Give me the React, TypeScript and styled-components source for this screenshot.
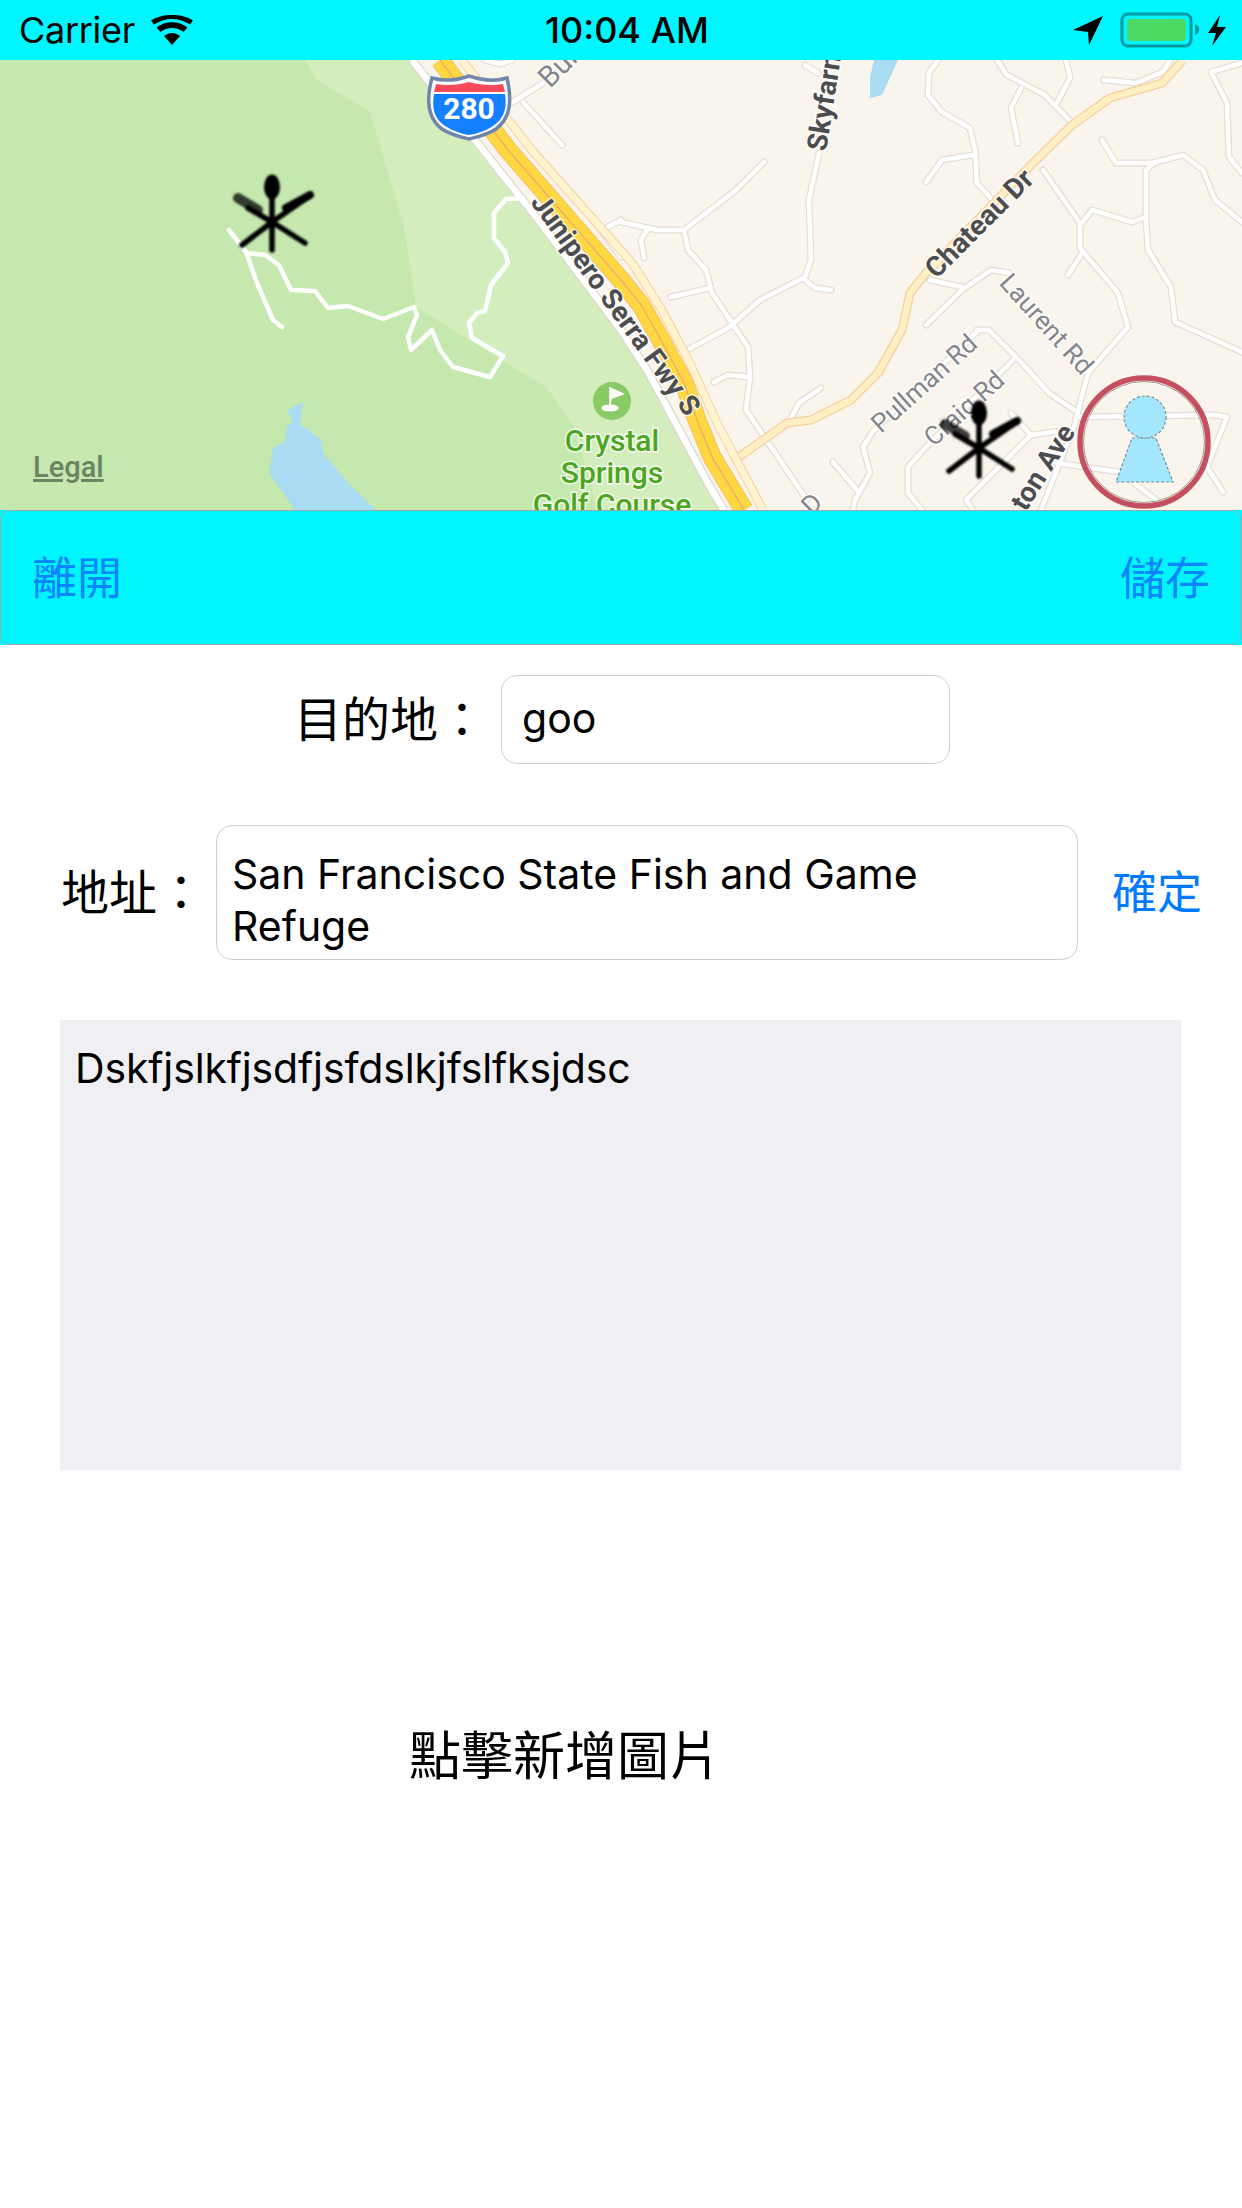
import React from "react";
import styled, { createGlobalStyle } from "styled-components";

const GlobalStyle = createGlobalStyle`
  html, body {
    margin: 0;
    padding: 0;
    background: #fff;
  }
  * {
    box-sizing: border-box;
  }
`;

const CJK = `Inter, "Noto Sans CJK TC", sans-serif`;

const Page = styled.div`
  width: 1242px;
  height: 2208px;
  overflow: hidden;
  display: flex;
  flex-direction: column;
  background: #fff;
  font-family: ${CJK};
  color: #000;
`;

const StatusBar = styled.div`
  height: 60px;
  background: #00f6ff;
  display: grid;
  grid-template-columns: 1fr auto 1fr;
  align-items: center;
  padding: 0 15px 0 19px;
`;

const StatusLeft = styled.div`
  display: flex;
  align-items: center;
  gap: 16px;
  font-size: 36px;
  letter-spacing: -0.3px;
`;

const Clock = styled.div`
  font-size: 36px;
  font-weight: 500;
  margin-left: 8px;
`;

const StatusRight = styled.div`
  display: flex;
  justify-content: flex-end;
  align-items: center;
`;

const MapView = styled.svg`
  display: block;
  width: 1242px;
  height: 450px;
  flex: none;
`;

const ToolbarShell = styled.div`
  height: 135px;
  flex: none;
  background: #00f6ff;
`;

const Toolbar = styled.div`
  height: 100%;
  border: 1.5px solid #a4a4a4;
  border-radius: 10px;
  display: flex;
  justify-content: space-between;
  align-items: center;
  padding: 2px 31px 0;
`;

const BarButton = styled.div`
  font-size: 45px;
  line-height: 60px;
  color: #0a84ff;
`;

const Row = styled.div<{ $indent: number; $top: number; $gap: number }>`
  display: flex;
  align-items: center;
  gap: ${(p) => p.$gap}px;
  margin-top: ${(p) => p.$top}px;
  padding-left: ${(p) => p.$indent}px;
`;

const Label = styled.div`
  font-size: 48px;
  line-height: 60px;
  white-space: nowrap;
`;

const Field = styled.div<{ $width: number; $height: number }>`
  width: ${(p) => p.$width}px;
  height: ${(p) => p.$height}px;
  flex: none;
  border: 1.5px solid #cfcfcf;
  border-radius: 16px;
  font-size: 41px;
  display: flex;
  align-items: center;
  padding: 0 15px 3px 20px;
  line-height: 52px;
`;

const AddressField = styled(Field)`
  padding: 14px 15px 0;
`;

const ConfirmButton = styled.div`
  font-size: 45px;
  line-height: 60px;
  color: #007aff;
  white-space: nowrap;
  margin-left: 23px;
`;

const NoteBox = styled.div`
  margin: 60px 0 0 60px;
  width: 1121px;
  height: 450px;
  background: #efeff4;
  padding: 22px 15px;
  font-size: 41px;
  line-height: 52px;
  letter-spacing: -0.14px;
`;

const AddImage = styled.div`
  margin: 252px 0 0 409px;
  font-size: 52px;
  line-height: 70px;
`;

const ROADS = [
  "M621 222 L657 230 L684 230 L736 190 L764 162",
  "M684 230 L688 250 L706 270 L712 293 L748 347 L750 377 L746 410 L807 500",
  "M647 230 L641 240 L644 258",
  "M819 153 L809 200 L811 260 L805 277 L760 300 L728 328 L678 355",
  "M805 280 L815 288 L831 290",
  "M671 297 L710 288",
  "M714 382 L728 375 L750 377",
  "M821 388 L799 403 L789 422",
  "M511 103 L543 83",
  "M523 102 L562 145",
  "M485 60 L500 64 L512 60",
  "M602 230 L621 220",
  "M602 232 L621 257",
  "M805 65 L818 73",
  "M938 60 L929 73 L928 95 L942 112 L970 128 L975 150 L977 183 L995 203",
  "M926 182 L942 160 L973 155",
  "M997 60 L1007 75 L1045 95 L1072 123",
  "M1066 60 L1070 78 L1057 103",
  "M1021 88 L1011 108 L1018 143",
  "M1104 80 L1136 83 L1163 72 L1170 60",
  "M1242 63 L1211 72 L1227 103 L1229 157 L1242 173",
  "M1102 140 L1116 163 L1152 163 L1183 155 L1203 170 L1215 200 L1242 222",
  "M1043 170 L1080 223 L1080 248 L1118 293 L1128 327 L1088 373 L1074 427 L1041 510",
  "M1082 223 L1092 210 L1132 222 L1146 217 L1146 170 L1154 163",
  "M1146 220 L1148 250 L1171 287 L1175 322 L1242 352",
  "M1082 253 L1068 275",
  "M926 325 L962 290 L991 270 L1009 273",
  "M930 280 L962 287",
  "M977 330 L989 330 L1021 362 L1049 393 L1074 410",
  "M1013 360 L926 447 L908 467 L908 493 L922 510",
  "M977 332 L874 430 L863 447 L870 473 L855 500 L853 510",
  "M833 462 L857 490",
  "M1011 413 L1031 435 L1068 430",
  "M1031 435 L966 500 L973 510",
  "M1076 417 L1215 415 L1227 417 L1207 467 L1223 492",
  "M1057 463 L1120 472 L1160 503",
];

const CHATEAU =
  "M732 462 L787 423 L811 420 L851 400 L878 373 L902 330 L910 293 L926 273 L1033 163 L1072 125 L1110 98 L1162 83 L1183 60";

const TRAILS = [
  "M229 230 L246 252 L257 283 L273 320 L282 327",
  "M246 253 L265 255 L279 265 L291 290 L315 291 L328 308 L348 306 L383 319 L414 307 L417 315 L408 337 L411 350 L432 330 L440 350 L453 367 L490 377 L503 356 L472 338 L469 323 L477 313 L485 311 L491 285 L508 263 L505 252 L494 238 L494 213 L506 199 L523 198",
];

const HIGHWAY = "M440 60 L508 150 L621 280 L641 305 L661 340 L684 383 L697 420 L712 457 L744 510";
const FRONTAGE_LEFT = "M412 60 L475 140 L540 222 L621 330 L647 370 L710 487 L724 510";
const FRONTAGE_RIGHT = "M462 60 L530 148 L632 263 L660 307 L687 357 L718 425 L763 510";

const MapText = styled.text<{ $size: number; $weight: number; $fill: string }>`
  font-family: Roboto, "Liberation Sans", sans-serif;
  font-size: ${(p) => p.$size}px;
  font-weight: ${(p) => p.$weight};
  fill: ${(p) => p.$fill};
  stroke: rgba(255, 255, 255, 0.75);
  stroke-width: 3px;
  paint-order: stroke;
`;

const RoadLabel = ({
  x,
  y,
  angle,
  size = 26,
  anchor = "middle",
  bold = false,
  children,
}: {
  x: number;
  y: number;
  angle: number;
  size?: number;
  anchor?: "start" | "middle" | "end";
  bold?: boolean;
  children: string;
}) => (
  <MapText
    $size={size}
    $weight={bold ? 700 : 400}
    $fill={bold ? "#4d4d4f" : "#85858a"}
    textAnchor={anchor}
    transform={`translate(${x} ${y}) rotate(${angle})`}
  >
    {children}
  </MapText>
);

// fork, knife and spoon crossed, the restaurant pin used on the map
const FoodPin = ({ x, y }: { x: number; y: number }) => (
  <g transform={`translate(${x} ${y})`} filter="url(#soft)" stroke="#000" fill="#000" strokeLinecap="round" strokeLinejoin="round">
    <path d="M0 -30 V28" strokeWidth="5.5" fill="none" />
    <path d="M-30 23 L0 0 L39 -27" strokeWidth="5.5" fill="none" />
    <path d="M33 21 L0 0 L-24 -14" strokeWidth="5.5" fill="none" />
    <ellipse cx="0" cy="-35" rx="8" ry="12.5" stroke="none" />
    <path d="M14 -14 L38 -27" strokeWidth="8" fill="none" />
    <path d="M-34 -24 L-14 -12" strokeWidth="10" fill="none" opacity="0.75" />
  </g>
);

const MapDrawing = () => (
  <MapView viewBox="0 60 1242 450">
    <defs>
      <filter id="soft" x="-20%" y="-20%" width="140%" height="140%">
        <feGaussianBlur stdDeviation="1.1" />
      </filter>
    </defs>
    <rect x="0" y="60" width="1242" height="450" fill="#f9f5ed" />
    <path d="M0 60 H412 L475 140 L540 222 L621 330 L647 370 L710 487 L724 510 H0 Z" fill="#c4e8ad" />
    <path
      d="M305 60 L317 80 L370 112 L404 227 L416 307 L547 388 L574 427 L598 510 H724 L710 487 L647 370 L621 330 L540 222 L475 140 L412 60 Z"
      fill="#d4edbc"
    />
    <path
      d="M287 410 L303 402 L300 425 L305 427 L321 440 L323 453 L348 483 L376 510 H295 L269 473 L273 448 L285 442 L287 425 L293 423 Z"
      fill="#a9dcf2"
    />
    <path d="M874 60 H898 L882 95 L870 98 V77 Z" fill="#a9dcf2" />

    {ROADS.map((d) => (
      <path key={`e${d}`} d={d} fill="none" stroke="#e4dfd6" strokeWidth="7" strokeLinejoin="round" strokeLinecap="round" />
    ))}
    {ROADS.map((d) => (
      <path key={`f${d}`} d={d} fill="none" stroke="#fff" strokeWidth="4.5" strokeLinejoin="round" strokeLinecap="round" />
    ))}
    <path d={CHATEAU} fill="none" stroke="#f5cf9e" strokeWidth="9" strokeLinejoin="round" />
    <path d={CHATEAU} fill="none" stroke="#fff0c4" strokeWidth="6.5" strokeLinejoin="round" />

    {/* frontage roads and freeway */}
    <path d={FRONTAGE_LEFT} fill="none" stroke="#ddd8d0" strokeWidth="9" strokeLinejoin="round" />
    <path d={FRONTAGE_LEFT} fill="none" stroke="#fff" strokeWidth="6.5" strokeLinejoin="round" />
    <path d={FRONTAGE_RIGHT} fill="none" stroke="#f6cfa0" strokeWidth="9" strokeLinejoin="round" />
    <path d={FRONTAGE_RIGHT} fill="none" stroke="#fff4cf" strokeWidth="7" strokeLinejoin="round" />
    <path d={HIGHWAY} fill="none" stroke="#f3b668" strokeWidth="19" strokeLinejoin="round" />
    <path d={HIGHWAY} fill="none" stroke="#ffd740" strokeWidth="17.5" strokeLinejoin="round" />
    <path d={HIGHWAY} fill="none" stroke="#eeb06a" strokeWidth="1.5" strokeLinejoin="round" />

    {TRAILS.map((d) => (
      <path key={d} d={d} fill="none" stroke="#fff" strokeWidth="4.5" strokeLinejoin="round" strokeLinecap="round" />
    ))}

    {/* interstate shield */}
    <path
      d="M432 78 C446 82 458 80 469 76 C481 80 494 82 507 78 C512 100 511 118 496 129 C487 135 477 137 469 139 C461 137 451 135 442 129 C427 118 426 100 432 78 Z"
      fill="#fff"
      stroke="#6f86ad"
      strokeWidth="3.5"
    />
    <path d="M436 84 C447 86 459 85 469 82 C480 85 492 86 503 84 L505 92 H434 Z" fill="#fb4a5b" />
    <path
      d="M434 94 H505 C507 107 505 118 493 126 C486 131 476 134 469 135 C462 134 453 131 445 126 C433 118 432 107 434 94 Z"
      fill="#1480ff"
    />
    <text x="469" y="119" textAnchor="middle" fontFamily="Roboto, sans-serif" fontWeight="700" fontSize="30" fill="#fff">
      280
    </text>

    <RoadLabel x={608} y={310} angle={54} size={28} bold>
      Junipero Serra Fwy S
    </RoadLabel>
    <RoadLabel x={826} y={152} angle={-81} size={28} anchor="start" bold>
      Skyfarm
    </RoadLabel>
    <RoadLabel x={986} y={230} angle={-45} size={28} bold>
      Chateau Dr
    </RoadLabel>
    <RoadLabel x={1040} y={330} angle={48}>
      Laurent Rd
    </RoadLabel>
    <RoadLabel x={930} y={390} angle={-42}>
      Pullman Rd
    </RoadLabel>
    <RoadLabel x={970} y={415} angle={-42}>
      Craig Rd
    </RoadLabel>
    <RoadLabel x={1076} y={432} angle={-58} size={28} anchor="end" bold>
      ton Ave
    </RoadLabel>
    <RoadLabel x={550} y={89} angle={-45} size={29} anchor="start">
      Bur
    </RoadLabel>
    <RoadLabel x={812} y={516} angle={-45} anchor="start">
      D
    </RoadLabel>

    {/* golf course */}
    <circle cx="612" cy="401" r="19" fill="#8aca64" />
    <path d="M610 408 V388 L623 394 L612 398" fill="#fff" stroke="#fff" strokeWidth="1.5" />
    <ellipse cx="610" cy="408" rx="9" ry="3.5" fill="#fff" />
    <MapText $size={30} $weight={500} $fill="#4ca61f" x={612} y={451} textAnchor="middle">
      Crystal
    </MapText>
    <MapText $size={30} $weight={500} $fill="#4ca61f" x={612} y={483} textAnchor="middle">
      Springs
    </MapText>
    <MapText $size={30} $weight={500} $fill="#4ca61f" x={612} y={515} textAnchor="middle">
      Golf Course
    </MapText>

    <text x="33" y="477" fontFamily="Roboto, sans-serif" fontWeight="500" fontSize="29" fill="#6b8562" textDecoration="underline">
      Legal
    </text>

    <FoodPin x={272} y={222} />
    <FoodPin x={979} y={448} />

    {/* current location button */}
    <circle cx="1144" cy="442" r="64" fill="none" stroke="#c4505f" strokeWidth="5.5" />
    <circle cx="1144" cy="442" r="60.5" fill="none" stroke="#6a5a5a" strokeWidth="1" opacity="0.6" />
    <path d="M1132 438 H1156 L1173 482 H1116 Z" fill="#a5e6ff" stroke="#6f8f9c" strokeWidth="1.2" strokeDasharray="3 2" />
    <circle cx="1145" cy="417" r="21" fill="#a5e6ff" stroke="#6f8f9c" strokeWidth="1.2" strokeDasharray="3 2" />
  </MapView>
);

const WifiIcon = () => (
  <svg width="42" height="30" viewBox="0 0 42 30">
    <path d="M21 30 L13 21 C18 17 24 17 29 21 Z" fill="#000" />
    <path d="M9.5 17 L5.5 12.5 C14 5.5 28 5.5 36.5 12.5 L32.5 17 C26 11.5 16 11.5 9.5 17 Z" fill="#000" />
    <path d="M3 9.5 L0 5.5 C12 -2 30 -2 42 5.5 L39 9.5 C28 2 14 2 3 9.5 Z" fill="#000" />
  </svg>
);

const BatteryGroup = () => (
  <svg width="168" height="60" viewBox="1060 0 168 60">
    <path d="M1104 16 L1074 30 L1089 32 L1090 45 Z" fill="#000" />
    <rect x="1123" y="14" width="69" height="32" rx="6" fill="none" stroke="#009aa3" strokeWidth="3" />
    <rect x="1128" y="19" width="59" height="22" rx="4" fill="#4cd964" />
    <path d="M1196 24 C1199 25 1200 27 1200 29.5 C1200 32 1199 34 1196 35 Z" fill="#009aa3" />
    <path d="M1221 15 L1209 33 H1217 L1213 46 L1227 27 H1218 Z" fill="#000" />
  </svg>
);

export default function App() {
  return (
    <Page>
      <GlobalStyle />
      <StatusBar>
        <StatusLeft>
          Carrier
          <WifiIcon />
        </StatusLeft>
        <Clock>10:04 AM</Clock>
        <StatusRight>
          <BatteryGroup />
        </StatusRight>
      </StatusBar>

      <MapDrawing />

      <ToolbarShell>
        <Toolbar>
          <BarButton>離開</BarButton>
          <BarButton>儲存</BarButton>
        </Toolbar>
      </ToolbarShell>

      <Row $indent={294} $top={30} $gap={15}>
        <Label>目的地：</Label>
        <Field $width={449} $height={89}>goo</Field>
      </Row>

      <Row $indent={61} $top={61} $gap={11}>
        <Label>地址：</Label>
        <AddressField $width={862} $height={135}>
          San Francisco State Fish and Game Refuge
        </AddressField>
        <ConfirmButton>確定</ConfirmButton>
      </Row>

      <NoteBox>Dskfjslkfjsdfjsfdslkjfslfksjdsc</NoteBox>

      <AddImage>點擊新增圖片</AddImage>
    </Page>
  );
}
